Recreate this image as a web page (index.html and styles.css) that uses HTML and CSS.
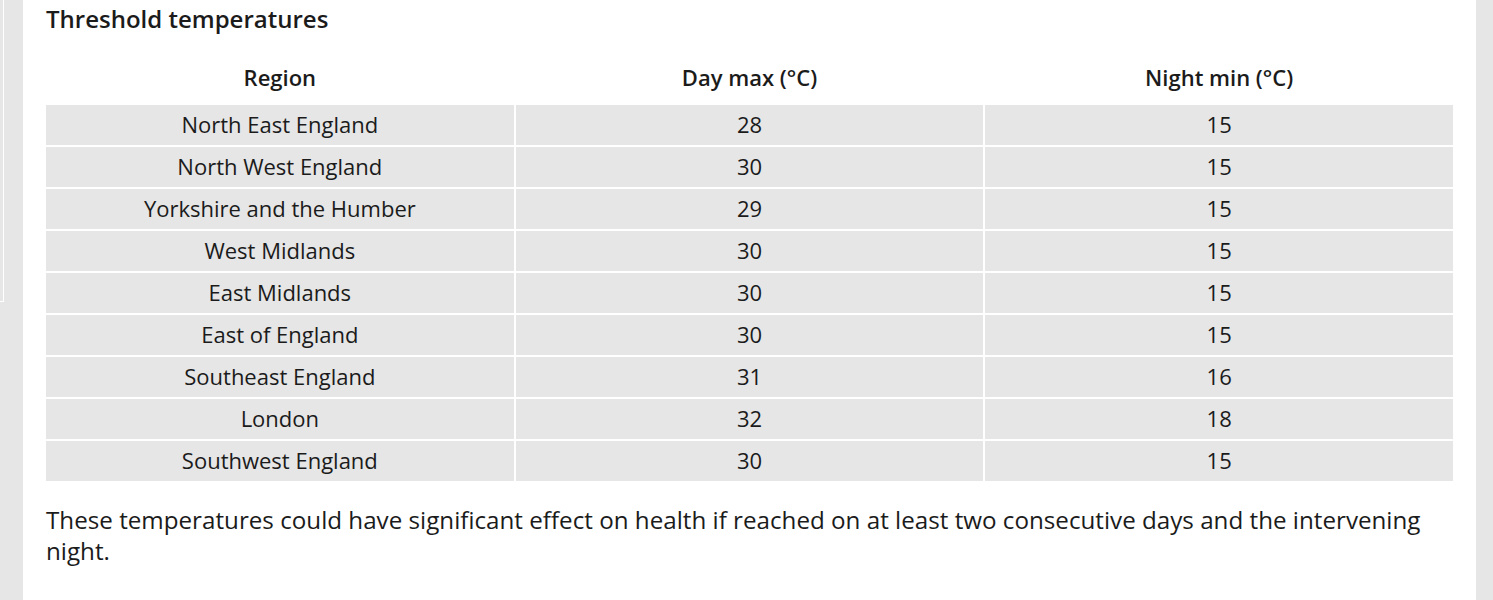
FILE: index.html
```html
<!DOCTYPE html>
<html>
<head>
<meta charset="utf-8">
<link rel="stylesheet" href="styles.css">
</head>
<body>
<div class="page">
  <div class="gutter"><div class="sliver"></div></div>
  <main class="panel">
    <h2 class="title">Threshold temperatures</h2>
    <table class="temps">
      <thead>
        <tr><th>Region</th><th>Day max (°C)</th><th>Night min (°C)</th></tr>
      </thead>
      <tbody>
        <tr><td>North East England</td><td>28</td><td>15</td></tr>
        <tr><td>North West England</td><td>30</td><td>15</td></tr>
        <tr><td>Yorkshire and the Humber</td><td>29</td><td>15</td></tr>
        <tr><td>West Midlands</td><td>30</td><td>15</td></tr>
        <tr><td>East Midlands</td><td>30</td><td>15</td></tr>
        <tr><td>East of England</td><td>30</td><td>15</td></tr>
        <tr><td>Southeast England</td><td>31</td><td>16</td></tr>
        <tr><td>London</td><td>32</td><td>18</td></tr>
        <tr><td>Southwest England</td><td>30</td><td>15</td></tr>
      </tbody>
    </table>
    <p class="note">These temperatures could have significant effect on health if reached on at least two consecutive days and the intervening night.</p>
  </main>
  <div class="gutter-right"></div>
</div>
</body>
</html>
```

FILE: styles.css
```css
html, body {
  margin: 0;
  padding: 0;
  background: #e6e6e6;
  height: 100%;
}
body {
  font-family: "Open Sans", "Noto Sans", sans-serif;
  color: #1b1b1b;
}
.page {
  display: flex;
  min-height: 600px;
}
.gutter {
  width: 23px;
  flex: none;
}
.sliver {
  width: 3px;
  height: 301px;
  border-right: 1px solid #fff;
  border-bottom: 1px solid #fff;
}
.panel {
  width: 1411px;
  flex: none;
  background: #fff;
  padding: 0 21px;
}
.gutter-right {
  flex: 1;
}
.title {
  margin: 0;
  padding: 4px 2px 0;
  font-size: 24px;
  font-weight: 600;
  line-height: 30px;
}
.temps {
  width: 100%;
  table-layout: fixed;
  border-spacing: 2px;
  margin-top: 20px;
  font-size: 22px;
}
.temps th {
  font-weight: 600;
  font-size: 22px;
  line-height: 26px;
  padding: 8px 0 13px;
  text-align: center;
}
.temps td {
  background: #e6e6e6;
  height: 38px;
  padding: 0 0 2px;
  line-height: 26px;
  text-align: center;
}
.note {
  margin: 21px 2px 0;
  font-size: 24.2px;
  line-height: 31px;
}
```
